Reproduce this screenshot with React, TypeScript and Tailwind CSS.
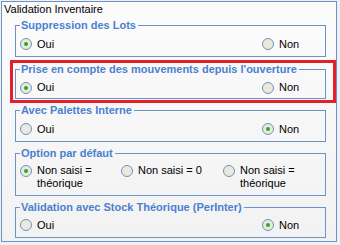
import React from "react";

type Opt = { label: string; checked?: boolean; width?: string };

function Radio({ label, checked, width }: Opt) {
  return (
    <label className={`flex items-start gap-[5px] ${width ?? ""}`}>
      <span className="mt-0 w-[12px] h-[12px] shrink-0 rounded-full border border-[#6a93c9] bg-[#ece9db] flex items-center justify-center">
        {checked && <span className="w-[4px] h-[4px] rounded-full bg-[#1fae1f]" />}
      </span>
      <span className="text-[11px] leading-[13px] -mt-[0.5px] text-black">{label}</span>
    </label>
  );
}

function Group({
  title,
  options,
  className = "",
}: {
  title: string;
  options: Opt[];
  className?: string;
}) {
  return (
    <fieldset className={`w-[311px] border border-[#6a93c9] ${className}`}>
      <legend className="ml-[4px] pl-[1px] pr-[2px] text-[11px] leading-[13px] font-bold text-[#4b80cf]">
        {title}
      </legend>
      <div className="flex pl-[4px] pt-[5px] pb-[5px]">
        {options.map((o) => (
          <Radio key={o.label} {...o} />
        ))}
      </div>
    </fieldset>
  );
}

export default function App() {
  return (
    <div
      className="min-h-screen bg-[#f0f0f0] pt-[1px] pl-[1px]"
      style={{ fontFamily: '"Liberation Sans", Arial, sans-serif' }}
    >
      <div className="w-[336px] h-[241px] border border-[#6a93c9] bg-gradient-to-b from-[#fcfcfc] to-[#f2f2f2]">
        <div className="pl-[2px] pt-[1px] text-[11px] leading-[13px] text-black">
          Validation Inventaire
        </div>

        <Group
          className="ml-[13px] mt-[3px] [&>div]:pt-[6px]"
          title="Suppression des Lots"
          options={[{ label: "Oui", checked: true, width: "w-[242px]" }, { label: "Non" }]}
        />

        <div className="ml-[8px] mt-[3px] w-[326px] border-[3px] border-[#e61e28] pl-[2px] pb-[1px]">
          <Group
            className="[&>div]:pt-[6px] [&>div]:pb-[4px]"
            title="Prise en compte des mouvements depuis l'ouverture"
            options={[{ label: "Oui", checked: true, width: "w-[242px]" }, { label: "Non" }]}
          />
        </div>

        <Group
          className="ml-[13px] mt-[1px] [&>div]:pt-[6px]"
          title="Avec Palettes Interne"
          options={[{ label: "Oui", width: "w-[242px]" }, { label: "Non", checked: true }]}
        />

        <Group
          className="ml-[13px] mt-[5px]"
          title="Option par défaut"
          options={[
            { label: "Non saisi = théorique", checked: true, width: "w-[101px] pr-[18px]" },
            { label: "Non saisi = 0", width: "w-[102px]" },
            { label: "Non saisi = théorique", width: "w-[90px] pr-[6px]" },
          ]}
        />

        <Group
          className="ml-[13px] mt-[5px]"
          title="Validation avec Stock Théorique (PerInter)"
          options={[{ label: "Oui", width: "w-[242px]" }, { label: "Non", checked: true }]}
        />
      </div>
    </div>
  );
}
